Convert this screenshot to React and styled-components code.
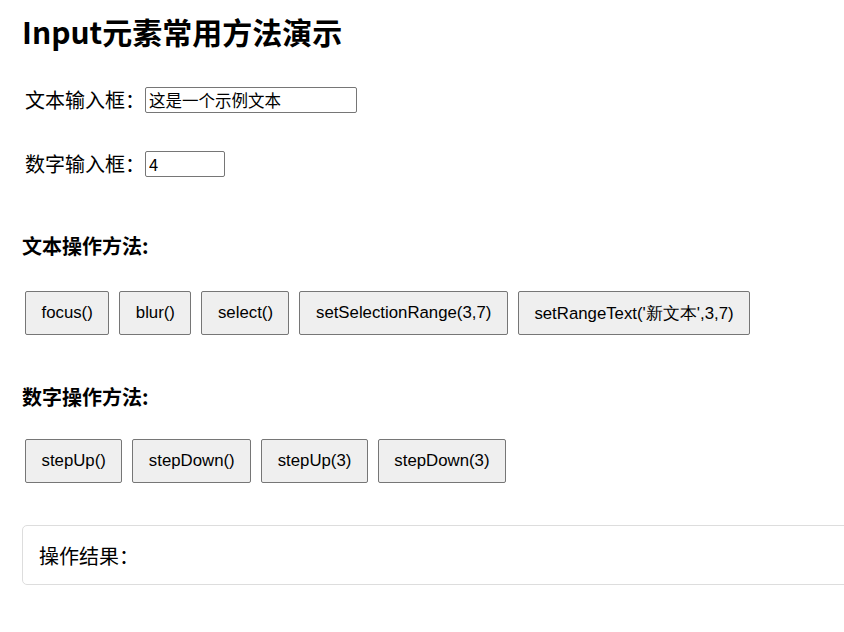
import React, { useRef, useState } from 'react'
import styled, { createGlobalStyle } from 'styled-components'

const GlobalStyle = createGlobalStyle`
  html, body {
    margin: 0;
    padding: 0;
    background: #fff;
    overflow: hidden;
  }
  body {
    font-family: "Noto Sans CJK SC", "Noto Sans", sans-serif;
    color: #000;
  }
`

const Page = styled.div`
  padding: 12px 0 0 22px;
`

const Title = styled.h1`
  margin: 0;
  font-size: 30px;
  line-height: 38px;
  font-weight: 700;
  font-family: "Noto Sans CJK SC", "Noto Sans", sans-serif;
`

const FieldRow = styled.div`
  display: flex;
  align-items: center;
  height: 26px;
  margin-top: ${p => p.$top}px;
  padding-left: 3px;
`

const Label = styled.label`
  width: 120px;
  font-size: 20px;
  line-height: 26px;
`

const TextInput = styled.input`
  box-sizing: border-box;
  width: ${p => p.$width}px;
  height: 26px;
  padding: 0 3px;
  border: 1px solid #767676;
  border-radius: 2px;
  font-size: 16.5px;
  font-family: "Noto Sans CJK SC", "Noto Sans", sans-serif;
  color: #000;
  outline: none;

  &::-webkit-outer-spin-button,
  &::-webkit-inner-spin-button {
    -webkit-appearance: none;
    margin: 0;
  }
  -moz-appearance: textfield;
`

const SectionTitle = styled.h3`
  margin: ${p => p.$top}px 0 0;
  font-size: 20px;
  line-height: 28px;
  font-weight: 700;
`

const ButtonRow = styled.div`
  display: flex;
  gap: 10px;
  margin-top: ${p => p.$top}px;
  padding-left: 3px;
`

const Button = styled.button`
  box-sizing: border-box;
  height: 44px;
  padding: 0 15.5px;
  background: #efefef;
  border: 1px solid #767676;
  border-radius: 2px;
  font-family: "Liberation Sans", Arial, sans-serif;
  font-size: 16.8px;
  color: #000;
  cursor: pointer;
  white-space: nowrap;

  &:hover {
    background: #e5e5e5;
  }
`

const ResultBox = styled.div`
  box-sizing: border-box;
  width: 860px;
  height: 60px;
  margin-top: 42px;
  padding: 0 16px;
  display: flex;
  align-items: center;
  border: 1px solid #ddd;
  border-radius: 5px;
  font-size: 20px;
`

export default function App() {
  const textRef = useRef(null)
  const numRef = useRef(null)
  const [text, setText] = useState('这是一个示例文本')
  const [num, setNum] = useState('4')
  const [result, setResult] = useState('')

  const run = (label, fn) => () => {
    try {
      fn()
      setResult(label)
    } catch (e) {
      setResult(label + ' 失败')
    }
  }

  const textMethods = [
    ['focus()', () => textRef.current.focus()],
    ['blur()', () => textRef.current.blur()],
    ['select()', () => textRef.current.select()],
    ['setSelectionRange(3,7)', () => { textRef.current.focus(); textRef.current.setSelectionRange(3, 7) }],
    ["setRangeText('新文本',3,7)", () => { textRef.current.setRangeText('新文本', 3, 7); setText(textRef.current.value) }],
  ]

  const numMethods = [
    ['stepUp()', () => { numRef.current.stepUp(); setNum(numRef.current.value) }],
    ['stepDown()', () => { numRef.current.stepDown(); setNum(numRef.current.value) }],
    ['stepUp(3)', () => { numRef.current.stepUp(3); setNum(numRef.current.value) }],
    ['stepDown(3)', () => { numRef.current.stepDown(3); setNum(numRef.current.value) }],
  ]

  return (
    <Page>
      <GlobalStyle />
      <Title>Input元素常用方法演示</Title>

      <FieldRow $top={37}>
        <Label>文本输入框：</Label>
        <TextInput ref={textRef} $width={212} value={text} onChange={e => setText(e.target.value)} />
      </FieldRow>

      <FieldRow $top={38}>
        <Label>数字输入框：</Label>
        <TextInput ref={numRef} type="number" $width={80} value={num} onChange={e => setNum(e.target.value)} />
      </FieldRow>

      <SectionTitle $top={55}>文本操作方法:</SectionTitle>
      <ButtonRow $top={31}>
        {textMethods.map(([label, fn]) => (
          <Button key={label} onClick={run(label, fn)}>{label}</Button>
        ))}
      </ButtonRow>

      <SectionTitle $top={48}>数字操作方法:</SectionTitle>
      <ButtonRow $top={28}>
        {numMethods.map(([label, fn]) => (
          <Button key={label} onClick={run(label, fn)}>{label}</Button>
        ))}
      </ButtonRow>

      <ResultBox>操作结果：{result}</ResultBox>
    </Page>
  )
}
